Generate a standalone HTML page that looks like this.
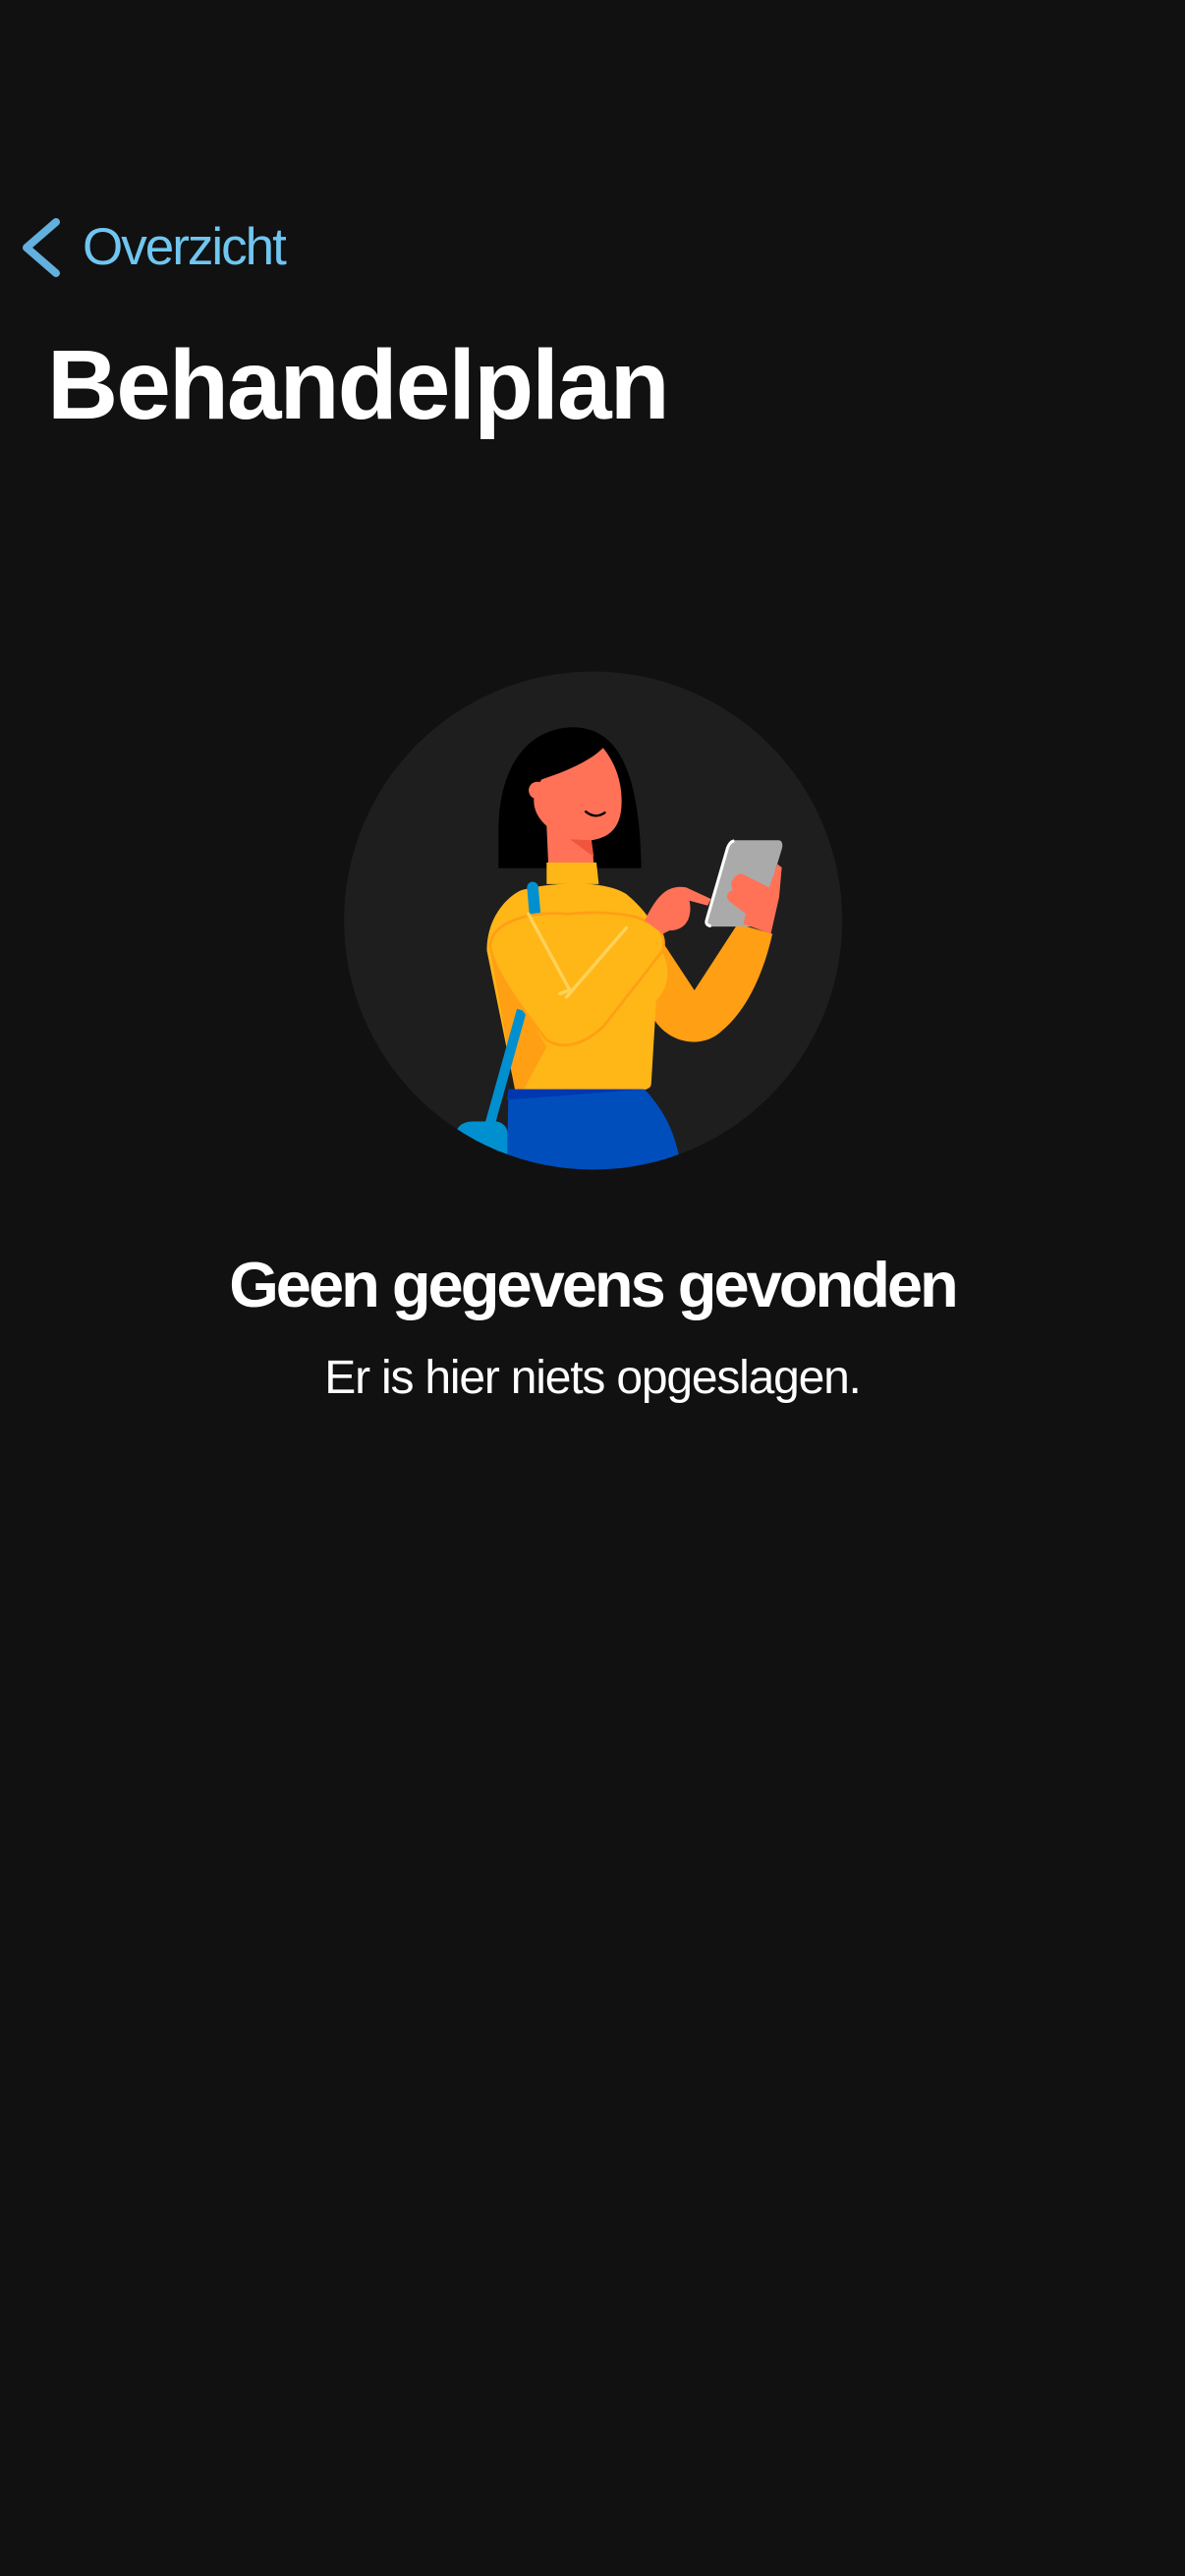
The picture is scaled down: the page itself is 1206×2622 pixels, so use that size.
<!DOCTYPE html>
<html><head><meta charset="utf-8">
<style>
html,body{margin:0;padding:0;background:#111111;}
body{width:1206px;height:2622px;position:relative;overflow:hidden;font-family:"Liberation Sans",sans-serif;}
.t{position:absolute;white-space:nowrap;line-height:1;}
</style></head><body>
<svg style="position:absolute;left:0;top:0" width="80" height="320">
<path d="M57 226 L27 252 L57 278" fill="none" stroke="#62b0de" stroke-width="8" stroke-linecap="round" stroke-linejoin="round"/>
</svg>
<div class="t" style="left:84px;top:225px;font-size:53px;color:#6fc6f0;letter-spacing:-2px;">Overzicht</div>
<div class="t" style="left:48px;top:342px;font-size:100px;font-weight:bold;color:#fff;letter-spacing:-2px;">Behandelplan</div>

<svg style="position:absolute;left:0;top:0" width="1206" height="1300" viewBox="0 0 1206 1300">
<defs><clipPath id="c"><circle cx="780" cy="790" r="750"/></clipPath></defs>
<g transform="translate(340,670) scale(0.338)">
<circle cx="780" cy="790" r="750" fill="#1e1e1e"/>
<g clip-path="url(#c)">
<path d="M495 632 L495 520 C495 330 580 210 720 208 C860 210 920 350 925 632 Z" fill="#000"/>
<path d="M625 365 C700 340 770 310 810 270 C850 320 870 380 865 450 C860 510 830 540 775 548 L782 618 L645 618 L640 505 C600 470 585 420 625 365 Z" fill="#ff7257"/>
<circle cx="612" cy="398" r="26" fill="#ff7257"/>
<path d="M710 545 L775 548 L782 598 Z" fill="#f0553d"/>
<path d="M758 462 Q787 485 815 465" fill="none" stroke="#000" stroke-width="7" stroke-linecap="round"/>
<path d="M940 780 L1085 1000 L1215 800 L1320 830 C1290 960 1240 1060 1170 1120 C1110 1180 1010 1160 965 1090 Z" fill="#ff9f14"/>
<path d="M640 615 L790 615 L797 680 L640 680 Z" fill="#ffb617"/>
<path d="M560 700 C620 680 800 660 880 710 C940 760 990 830 985 880 C1015 930 1010 990 970 1030 L955 1280 C955 1295 940 1300 925 1300 L545 1300 L460 880 C460 780 520 720 560 700 Z" fill="#ffb617"/>
<path d="M470 880 L545 1300 L570 1300 L640 1170 Z" fill="#ff9f14"/>
<path d="M598 690 L610 830" stroke="#0090d0" stroke-width="34" stroke-linecap="round"/>
<path d="M565 1060 L470 1400" stroke="#0090d0" stroke-width="30"/>
<path d="M470 860 C470 930 570 1060 640 1150 C690 1180 750 1165 810 1110 L990 880 C1000 840 980 800 935 790 C900 770 800 760 700 770 C600 760 480 790 470 860 Z" fill="#ffb617" stroke="#ff9f14" stroke-width="8"/>
<path d="M585 770 L710 1000 M880 812 L700 1020 M680 1010 L712 998" stroke="#ffd25a" stroke-width="10" stroke-linecap="round" fill="none"/>
<path d="M935 790 C970 720 1000 680 1060 690 L1135 725 L1125 745 L1070 730 C1080 780 1060 820 1010 820 L990 830 Z" fill="#ff7257"/>
<path d="M1200 548 L1338 548 C1350 548 1352 562 1348 575 L1280 800 C1276 806 1270 808 1262 808 L1130 808 C1120 808 1115 800 1120 790 L1185 565 C1190 552 1195 548 1200 548 Z" fill="#aaaaaa"/>
<path d="M1205 550 C1195 552 1190 558 1185 570 L1122 788 C1118 800 1125 806 1135 806" fill="none" stroke="#fff" stroke-width="9"/>
<path d="M1230 650 L1310 690 L1335 620 L1348 630 L1340 720 L1315 830 L1232 800 L1240 770 L1190 732 C1176 718 1186 700 1200 700 L1195 680 C1200 660 1218 645 1230 650 Z" fill="#ff7257"/>
<path d="M525 1298 L935 1298 C1000 1370 1030 1430 1050 1560 L520 1560 Z" fill="#004ebc"/>
<path d="M525 1298 L935 1298 L520 1330 Z" fill="#0038b0"/>
<path d="M370 1420 C380 1400 400 1395 420 1395 L490 1395 C515 1400 525 1420 522 1440 L522 1560 L340 1560 Z" fill="#0090d0"/>
</g>
</g>
</svg>

<div class="t" style="left:0;width:1206px;text-align:center;top:1275px;font-size:65px;font-weight:bold;color:#fff;letter-spacing:-3px;">Geen gegevens gevonden</div>
<div class="t" style="left:0;width:1206px;text-align:center;top:1379px;font-size:48px;color:#fff;letter-spacing:-1.2px;">Er is hier niets opgeslagen.</div>
</body></html>
